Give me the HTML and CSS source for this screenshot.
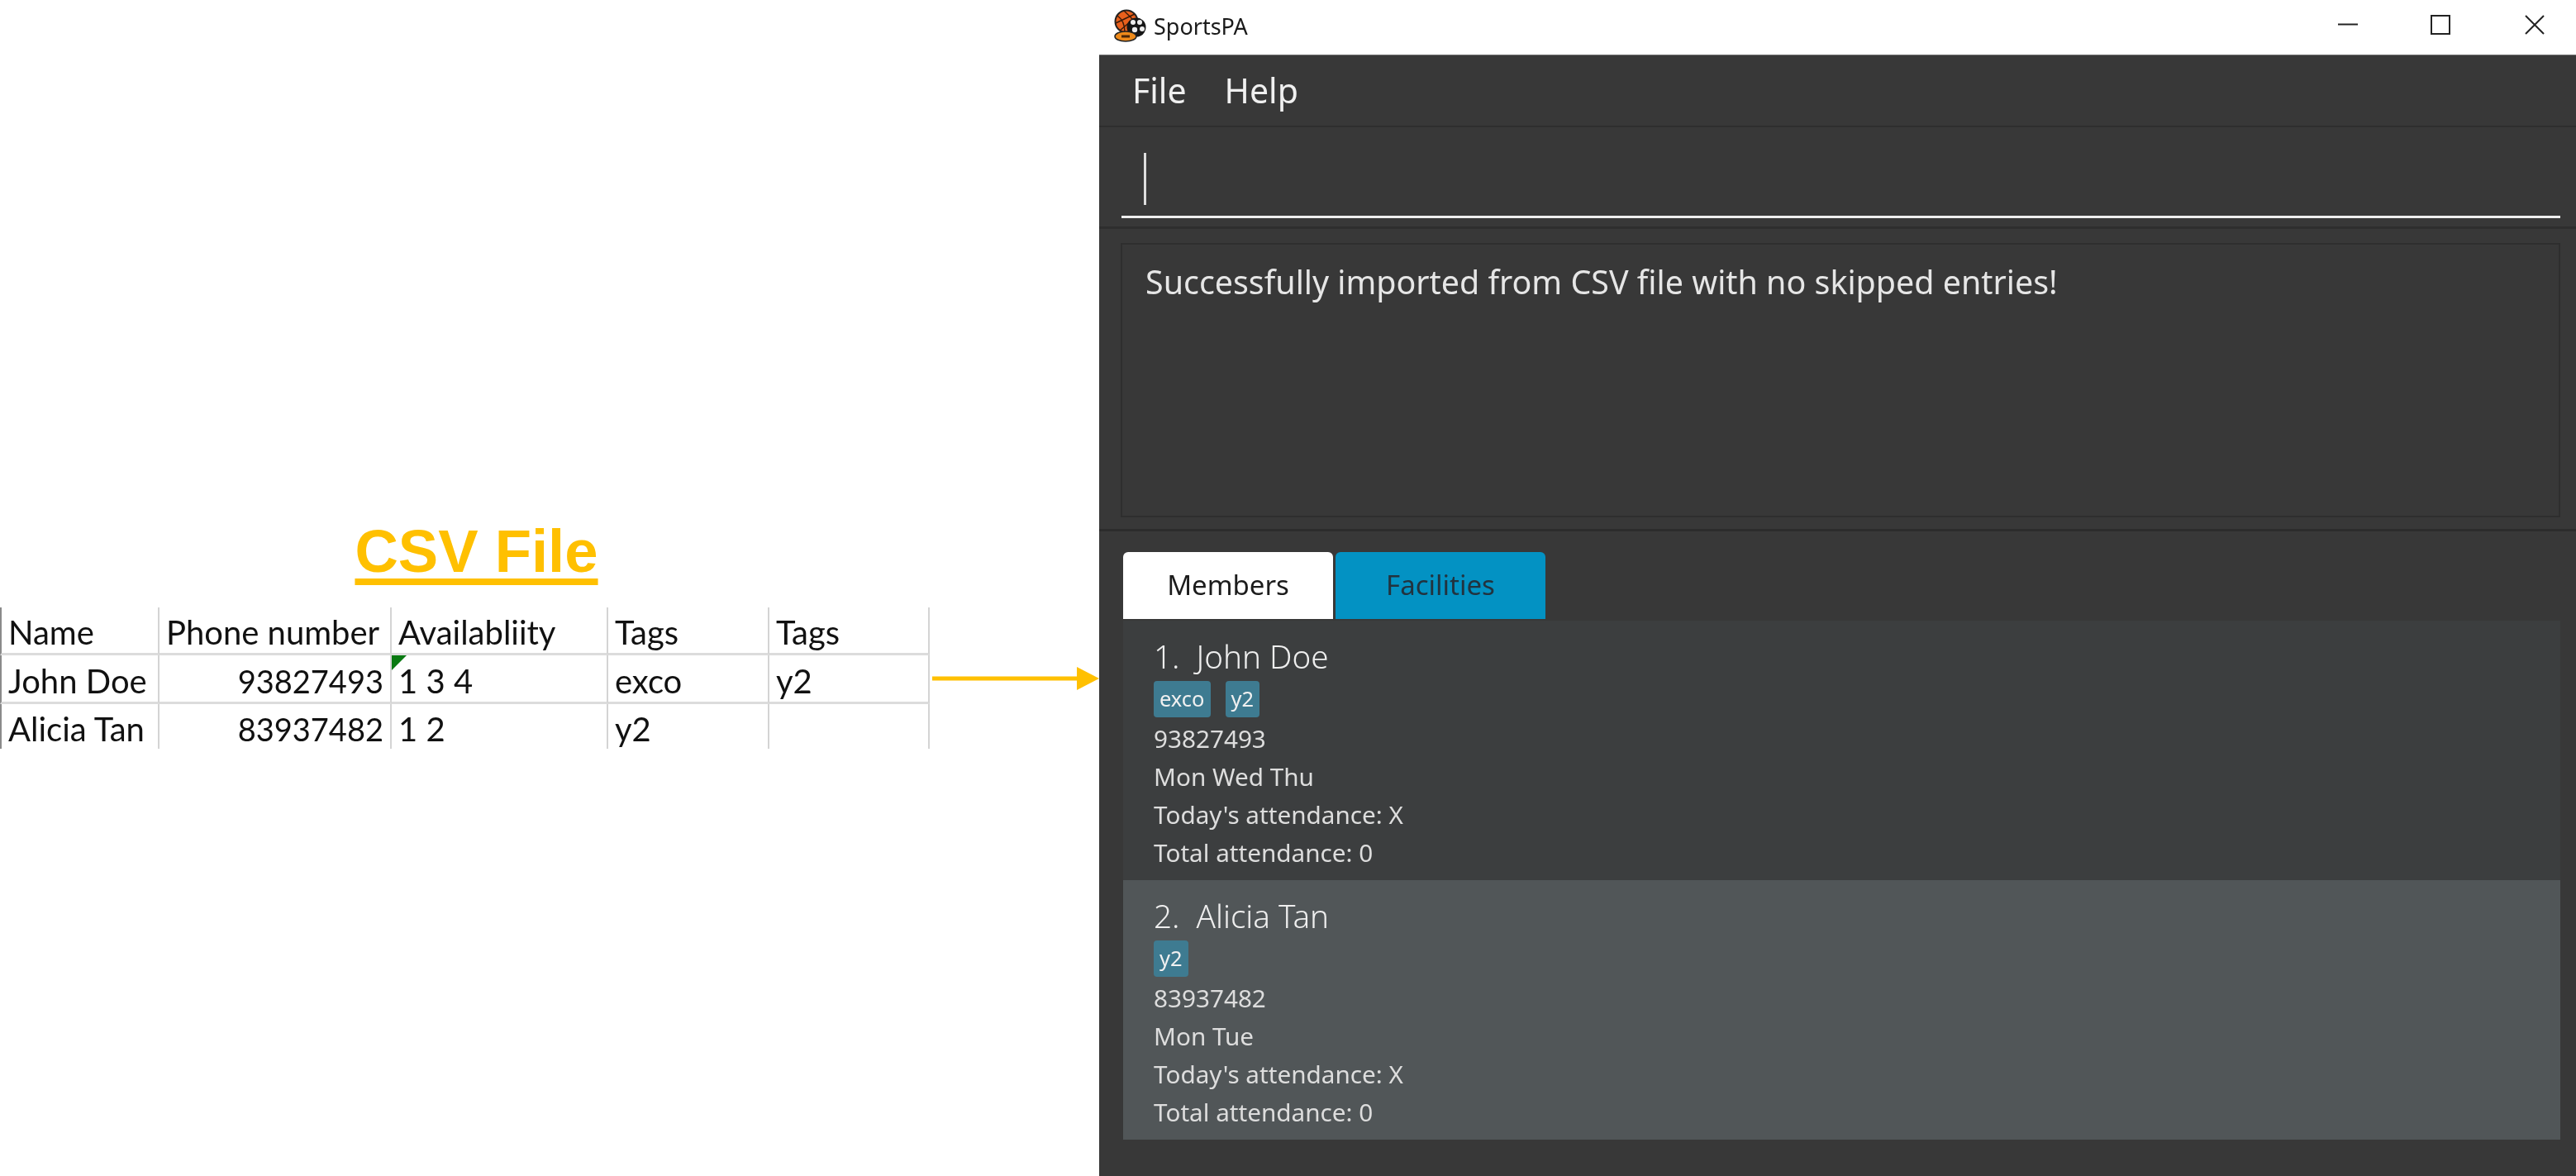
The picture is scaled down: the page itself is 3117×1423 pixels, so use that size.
FILE: index.html
```html
<!DOCTYPE html>
<html lang="en">
<head>
<meta charset="utf-8">
<title>SportsPA CSV import</title>
<link rel="stylesheet" href="styles.css">
</head>
<body>
<main class="page">
  <section class="left">
    <h1 class="csv-title">CSV File</h1>
    <div class="sheet-row">
      <div class="sheet">
        <div class="c">Name</div><div class="c">Phone number</div><div class="c">Availabliity</div><div class="c">Tags</div><div class="c">Tags</div>
        <div class="c">John Doe</div><div class="c num">93827493</div><div class="c flag">1 3 4</div><div class="c">exco</div><div class="c">y2</div>
        <div class="c">Alicia Tan</div><div class="c num">83937482</div><div class="c">1 2</div><div class="c">y2</div><div class="c"></div>
      </div>
      <svg class="arrow" width="203" height="28" viewBox="0 0 203 28"><rect x="0" y="11.5" width="178" height="5" fill="#ffc000"/><path d="M175 0L202 14L175 28Z" fill="#ffc000"/></svg>
    </div>
  </section>
  <section class="window">
    <header class="titlebar">
      <svg class="logo" width="40" height="40" viewBox="0 0 40 40">
        <circle cx="16" cy="15" r="13.5" fill="#e8601c" stroke="#222" stroke-width="2"/>
        <path d="M5 8Q14 14 14 28M13 2Q21 9 28 18M3 17L26 6M8 26L22 14" fill="none" stroke="#3a1a08" stroke-width="1.5"/>
        <circle cx="28" cy="22" r="11.5" fill="#161616"/>
        <circle cx="24" cy="16" r="3" fill="#eee"/><circle cx="32" cy="16" r="3" fill="#eee"/><circle cx="35" cy="24" r="3" fill="#eee"/><circle cx="26" cy="25" r="3.2" fill="#eee"/>
        <ellipse cx="15" cy="33" rx="13" ry="6" fill="#ee8a1a" stroke="#222" stroke-width="1.5"/>
        <rect x="10" y="31.5" width="10" height="3" fill="#4a2608"/>
      </svg>
      <span class="app-name">SportsPA</span>
      <div class="win-btns">
        <svg width="24" height="24" viewBox="0 0 24 24"><path d="M0 11.5H24" stroke="#222" stroke-width="2"/></svg>
        <svg width="24" height="24" viewBox="0 0 24 24"><rect x="1" y="1" width="22" height="22" fill="none" stroke="#222" stroke-width="2"/></svg>
        <svg class="close" width="24" height="24" viewBox="0 0 24 24"><path d="M1 1L23 23M23 1L1 23" stroke="#222" stroke-width="2"/></svg>
      </div>
    </header>
    <nav class="menu"><span>File</span><span>Help</span></nav>
    <div class="command"><div class="cmd-input"><span class="caret"></span></div></div>
    <div class="result-wrap"><div class="result">Successfully imported from CSV file with no skipped entries!</div></div>
    <div class="tabs-area">
      <div class="tabs"><div class="tab active">Members</div><div class="tab">Facilities</div></div>
      <div class="list">
        <article class="card">
          <div class="name">1.&nbsp; John Doe</div>
          <div class="tags"><span class="tag">exco</span><span class="tag">y2</span></div>
          <div class="line first">93827493</div>
          <div class="line">Mon Wed Thu</div>
          <div class="line">Today's attendance: X</div>
          <div class="line">Total attendance: 0</div>
        </article>
        <article class="card alt">
          <div class="name">2.&nbsp; Alicia Tan</div>
          <div class="tags"><span class="tag">y2</span></div>
          <div class="line first">83937482</div>
          <div class="line">Mon Tue</div>
          <div class="line">Today's attendance: X</div>
          <div class="line">Total attendance: 0</div>
        </article>
      </div>
    </div>
  </section>
</main>
</body>
</html>
```
FILE: styles.css
```css
* { box-sizing: border-box; }
html, body { margin: 0; height: 100%; background: #fff; overflow: hidden; }
.page { display: flex; width: 3117px; height: 1423px; }

.left { width: 1330px; flex: none; padding-top: 623px; }
.csv-title {
  width: 1153px; margin: 0 0 24px; height: 88px; text-align: center;
  font: bold 72.5px/88px "Liberation Sans", sans-serif; color: #ffc000;
  text-decoration: underline; text-decoration-thickness: 8px; text-underline-offset: 8px;
}
.sheet-row { display: flex; align-items: flex-start; }
.sheet {
  display: grid; flex: none;
  grid-template-columns: 193px 281px 262px 195px 194px;
  grid-template-rows: 58px 59px 54px;
  width: 1125px; height: 171px;
  font: 40px "Lato", sans-serif; color: #111;
  filter: blur(.4px);
}
.c {
  border-right: 2px solid #d4d4d4; border-bottom: 3px solid #dcdcdc;
  padding: 5px 8px 0; display: flex; align-items: center; position: relative; white-space: nowrap;
}
.c:nth-last-child(-n+5) { border-bottom: 0; }
.c:nth-child(5n+1) { border-left: 2px solid #8a8a8a; padding-left: 8px; }
.num { justify-content: flex-end; padding-right: 8px; font-size: 38px; }
.flag::before {
  content: ""; position: absolute; left: 0; top: 0; width: 18px; height: 18px;
  background: #0a7a12; clip-path: polygon(0 0, 100% 0, 0 100%);
}
.arrow { flex: none; margin: 72px 0 0 3px; }

.window { width: 1787px; flex: none; display: flex; flex-direction: column; background: #383838; color: #eee; font-family: "Noto Sans", sans-serif; }
.titlebar { height: 67px; flex: none; background: #fff; display: flex; align-items: center; padding-left: 17px; border-bottom: 1px solid #777; }
.logo { flex: none; margin-top: -5px; }
.app-name { margin-left: 9px; font-size: 27px; color: #1a1a1a; margin-top: -4px; filter: blur(.4px); }
.win-btns { margin-left: auto; display: flex; gap: 88px; padding-right: 38px; margin-top: -6px; }
.win-btns .close { margin-left: 2px; }
.menu { height: 87px; flex: none; display: flex; gap: 46px; align-items: center; padding-left: 40px; font-size: 41px; border-bottom: 2px solid #2e2e2e; color: #f0f0f0; padding-bottom: 2px; }
.command { height: 123px; flex: none; padding: 31px 19px 0 27px; border-bottom: 3px solid #2e2e2e; }
.cmd-input { height: 79px; border-bottom: 3px solid #eee; padding-left: 27px; }
.caret { display: block; width: 3px; height: 63px; background: #ddd; }
.result-wrap { height: 366px; flex: none; padding: 17px 19px 14px 26px; border-bottom: 3px solid #2c2c2c; }
.result { height: 100%; border: 2px solid #2e2e2e; padding: 15px 28px; font-size: 39.4px; line-height: 60px; color: #e6e6e6; }
.tabs-area { flex: 1; padding: 25px 19px 0 29px; }
.tabs { display: flex; gap: 3px; height: 83px; }
.tab { width: 254px; height: 81px; border-radius: 6px 6px 0 0; background: #0392c3; color: #22333f; display: flex; align-items: center; justify-content: center; font-size: 33px; padding-bottom: 2px; }
.tab.active { background: #fff; color: #1c1c1c; }
.list { display: flex; flex-direction: column; }
.card { height: 314px; background: #3c3e3f; padding: 18px 37px 0; }
.card.alt { background: #515658; }
.name { font-size: 38.6px; line-height: 50px; color: #eee; font-weight: 300; }
.tags { display: flex; gap: 18px; margin-top: 5px; height: 44px; }
.tag { background: #3e7b91; border-radius: 4px; padding: 0 7px; height: 44px; line-height: 42px; font-size: 25.5px; color: #f0f0f0; }
.line { height: 46px; line-height: 46px; font-size: 29.7px; color: #ddd; }
.line.first { margin-top: 3px; }
.menu span, .result, .tab, .name, .tag, .line { filter: blur(.4px); }
```
